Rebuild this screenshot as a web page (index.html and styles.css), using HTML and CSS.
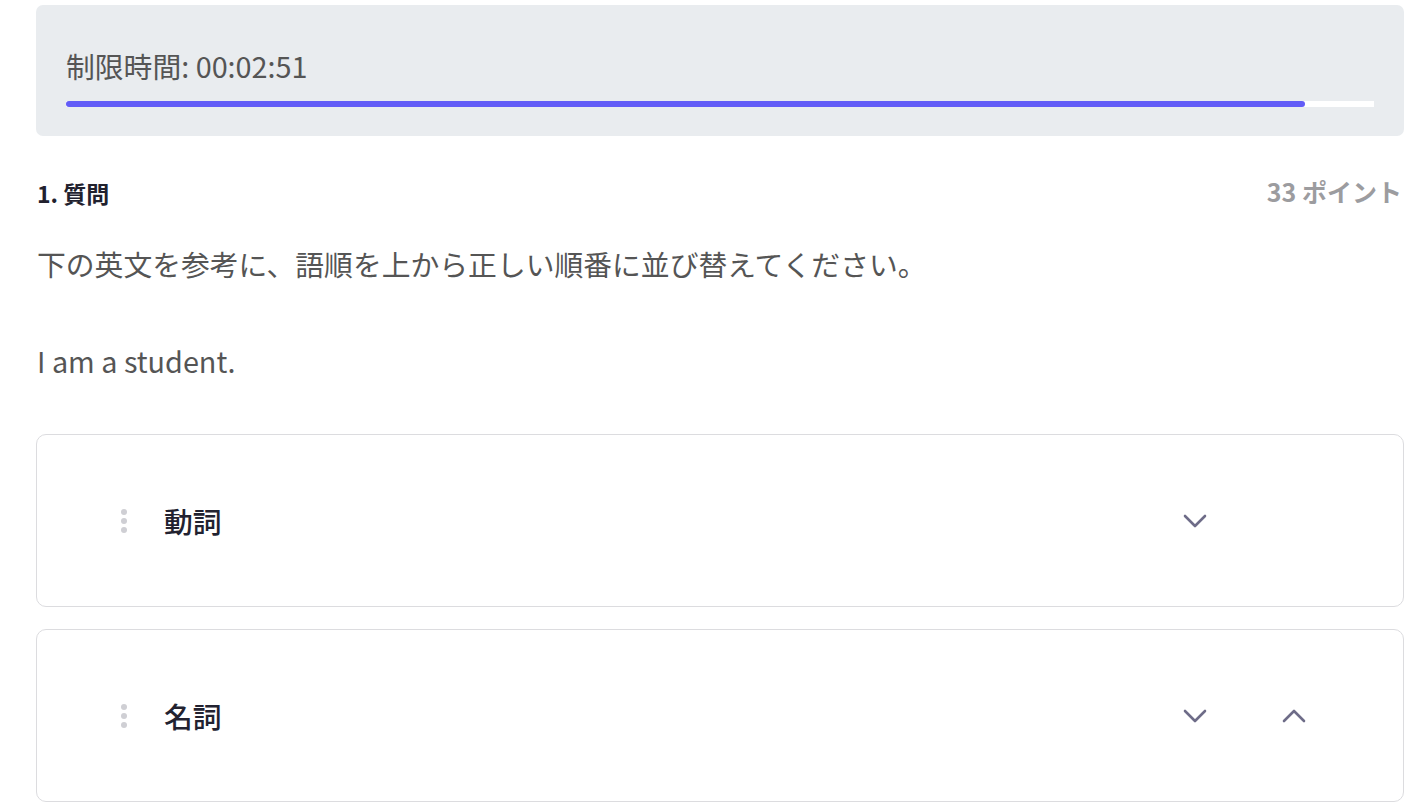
FILE: index.html
```html
<!DOCTYPE html>
<html lang="ja">
<head>
<meta charset="utf-8">
<title>Quiz</title>
<link rel="stylesheet" href="styles.css">
</head>
<body>
<div class="page">
  <section class="timer">
    <div class="timer-text">制限時間: 00:02:51</div>
    <div class="track"><div class="fill" style="width:94.7%"></div></div>
  </section>

  <div class="q-head">
    <div class="q-title">1. 質問</div>
    <div class="q-points">33 ポイント</div>
  </div>

  <p class="q-desc">下の英文を参考に、語順を上から正しい順番に並び替えてください。</p>
  <p class="q-sentence">I am a student.</p>

  <div class="items">
    <div class="card">
      <span class="grip"><i></i><i></i><i></i></span>
      <span class="label">動詞</span>
      <div class="actions">
        <span class="slot">
          <svg width="24" height="14" viewBox="0 0 24 14"><path d="M2 2 L12 12 L22 2" fill="none" stroke="#6e6c88" stroke-width="2.6" stroke-linecap="round" stroke-linejoin="round"/></svg>
        </span>
        <span class="slot"></span>
      </div>
    </div>
    <div class="card">
      <span class="grip"><i></i><i></i><i></i></span>
      <span class="label">名詞</span>
      <div class="actions">
        <span class="slot">
          <svg width="24" height="14" viewBox="0 0 24 14"><path d="M2 2 L12 12 L22 2" fill="none" stroke="#6e6c88" stroke-width="2.6" stroke-linecap="round" stroke-linejoin="round"/></svg>
        </span>
        <span class="slot">
          <svg width="24" height="14" viewBox="0 0 24 14"><path d="M2 12 L12 2 L22 12" fill="none" stroke="#6e6c88" stroke-width="2.6" stroke-linecap="round" stroke-linejoin="round"/></svg>
        </span>
      </div>
    </div>
  </div>
</div>
</body>
</html>
```

FILE: styles.css
```css
* { box-sizing: border-box; }
html, body { margin: 0; padding: 0; background: #fff; }
body {
  font-family: "Noto Sans CJK JP", "Noto Sans", sans-serif;
  color: #555;
}
.page {
  padding: 5px 12px 0 36px;
}
.timer {
  background: #e9ecef;
  border-radius: 7px;
  padding: 40px 30px 29px 30px;
}
.timer-text {
  font-size: 28.8px;
  line-height: 42px;
  color: #555;
}
.track {
  margin-top: 14px;
  height: 6px;
  background: #fff;
}
.fill {
  height: 6px;
  background: #625cf7;
  border-radius: 3px;
}
.q-head {
  display: flex;
  justify-content: space-between;
  align-items: center;
  margin-top: 38px;
  padding-left: 1px;
}
.q-title {
  font-size: 23px;
  font-weight: 700;
  color: #21212e;
  line-height: 34px;
  position: relative;
  top: 2px;
}
.q-points {
  font-size: 25px;
  font-weight: 700;
  color: #9c9c9f;
  line-height: 34px;
  margin-right: 2px;
}
.q-desc {
  margin: 35px 0 0 1px;
  font-size: 28.8px;
  line-height: 42px;
  color: #555;
}
.q-sentence {
  margin: 55px 0 0 1px;
  font-size: 28.8px;
  line-height: 42px;
  color: #555;
}
.items {
  margin-top: 52px;
  display: flex;
  flex-direction: column;
  gap: 22px;
}
.card {
  height: 173px;
  border: 1px solid #dcdcdf;
  border-radius: 10px;
  display: flex;
  align-items: center;
  padding-left: 84px;
}
.grip {
  display: flex;
  flex-direction: column;
  gap: 3px;
  width: 6px;
  margin-right: 37px;
}
.grip i {
  display: block;
  width: 6px;
  height: 6px;
  border-radius: 50%;
  background: #cfcfd4;
}
.label {
  font-size: 28.8px;
  font-weight: 500;
  color: #222230;
  line-height: 42px;
  flex: 1;
}
.actions {
  display: flex;
  margin-right: 60px;
}
.slot {
  width: 99px;
  height: 40px;
  display: flex;
  align-items: center;
  justify-content: center;
}
.slot svg { display: block; }
```
